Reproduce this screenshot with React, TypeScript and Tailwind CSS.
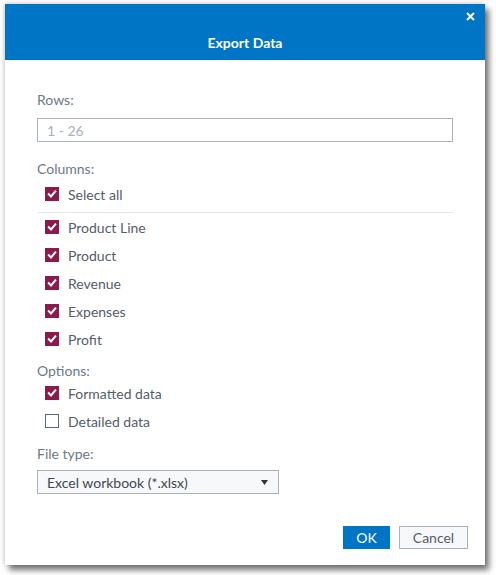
import React from "react";

function Check({ checked }: { checked: boolean }) {
  if (!checked) {
    return <span className="block w-[14px] h-[14px] border border-[#5b6878] bg-white shrink-0" />;
  }
  return (
    <span className="flex items-center justify-center w-[14px] h-[14px] bg-[#8c1a4c] shrink-0">
      <svg width="10" height="10" viewBox="0 0 10 10">
        <path d="M1.8 5.2 L4 7.4 L8.3 2.3" fill="none" stroke="#fff" strokeWidth="2" strokeLinecap="square" />
      </svg>
    </span>
  );
}

function Row({ label, checked = true, h = "h-[28px]" }: { label: string; checked?: boolean; h?: string }) {
  return (
    <div className={`flex items-center gap-[9px] pl-[8px] ${h}`}>
      <Check checked={checked} />
      <span className="text-[14px] text-[#555d68]">{label}</span>
    </div>
  );
}

export default function App() {
  return (
    <div className="w-[496px] h-[575px] bg-white relative" style={{ fontFamily: "Lato, 'Open Sans', sans-serif" }}>
      <div className="absolute left-[5px] top-[4px] w-[480px] h-[561px] bg-white flex flex-col shadow-[4px_5px_6px_rgba(0,0,0,0.55),-1px_-1px_4px_rgba(0,0,0,0.18)]">
        <div className="h-[56px] bg-[#0075c6] relative flex items-end justify-center pb-[7px] shrink-0">
          <span className="text-white font-bold text-[14px]">Export Data</span>
          <svg className="absolute right-[10px] top-[8px]" width="9" height="9" viewBox="0 0 9 9">
            <path d="M1 1 L8 8 M8 1 L1 8" stroke="#fff" strokeWidth="2" />
          </svg>
        </div>
        <div className="flex flex-col px-[32px] pt-[31px]">
          <div className="text-[14px] text-[#6e7986] leading-[18px]">Rows:</div>
          <div className="mt-[9px] h-[24px] border border-[#a9b1bb] flex items-center pl-[9px] text-[14px] text-[#a8b0ba]">1 - 26</div>
          <div className="mt-[18px] text-[14px] text-[#6e7986] leading-[18px]">Columns:</div>
          <div className="mt-[3px]">
            <Row label="Select all" h="h-[26px]" />
          </div>
          <div className="mt-[5px] h-px bg-[#e4e6e9]" />
          <div className="mt-[0px]">
            <Row label="Product Line" />
            <Row label="Product" />
            <Row label="Revenue" />
            <Row label="Expenses" />
            <Row label="Profit" />
          </div>
          <div className="mt-[9px] text-[14px] text-[#6e7986] leading-[18px]">Options:</div>
          <div className="-mt-[1px]">
            <Row label="Formatted data" />
            <Row label="Detailed data" checked={false} />
          </div>
          <div className="mt-[10px] text-[14px] text-[#6e7986] leading-[18px]">File type:</div>
          <div className="mt-[7px] w-[242px] h-[24px] border border-[#a9b1bb] bg-[#f7f8fa] flex items-center justify-between pl-[9px] pr-[10px]">
            <span className="text-[14px] text-[#3f4650]">Excel workbook (*.xlsx)</span>
            <svg width="7" height="5" viewBox="0 0 7 5"><path d="M0 0 H7 L3.5 5 Z" fill="#333" /></svg>
          </div>
        </div>
        <div className="flex-1" />
        <div className="flex justify-end gap-[9px] pr-[17px] pb-[16px]">
          <div className="w-[47px] h-[23px] bg-[#0075c6] text-white text-[14px] flex items-center justify-center">OK</div>
          <div className="w-[69px] h-[23px] bg-[#f7f8fa] border border-[#a9b1bb] text-[#555d68] text-[14px] flex items-center justify-center">Cancel</div>
        </div>
      </div>
    </div>
  );
}
